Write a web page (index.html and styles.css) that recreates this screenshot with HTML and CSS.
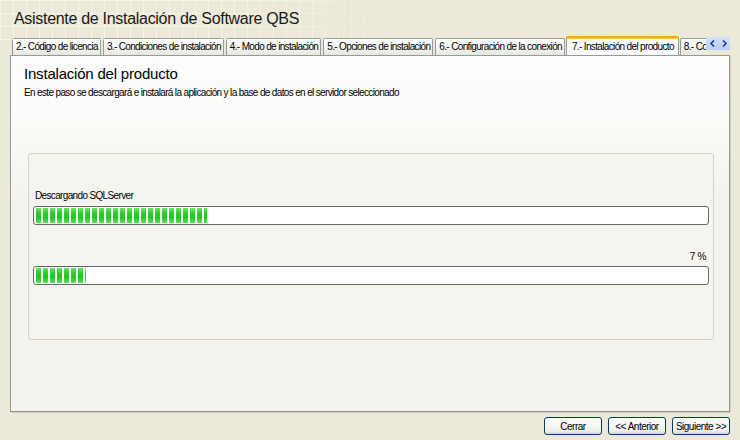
FILE: index.html
```html
<!DOCTYPE html>
<html lang="es">
<head>
    <meta charset="UTF-8">
    <title>Asistente de Instalación de Software QBS</title>
    <link rel="stylesheet" href="styles.css">
</head>
<body>
    <div class="window">
        <h1 class="title">Asistente de Instalación de Software QBS</h1>

        <div class="tab-row">
            <div class="tabs">
                <div class="tab">2.- Código de licencia</div>
                <div class="tab">3.- Condiciones de instalación</div>
                <div class="tab">4.- Modo de instalación</div>
                <div class="tab">5.- Opciones de instalación</div>
                <div class="tab">6.- Configuración de la conexión</div>
                <div class="tab active">7.- Instalación del producto</div>
                <div class="tab">8.- Configuración final</div>
            </div>
            <div class="tab-scroll">
                <span class="scroll-btn">
                    <svg width="7" height="7" viewBox="0 0 7 7"><path d="M5 0.5 L2 3.5 L5 6.5" fill="none" stroke="#1c3f94" stroke-width="1.6"/></svg>
                </span>
                <span class="scroll-btn">
                    <svg width="7" height="7" viewBox="0 0 7 7"><path d="M2 0.5 L5 3.5 L2 6.5" fill="none" stroke="#1c3f94" stroke-width="1.6"/></svg>
                </span>
            </div>
        </div>

        <div class="panel">
            <h2 class="panel-title">Instalación del producto</h2>
            <p class="panel-desc">En este paso se descargará e instalará la aplicación y la base de datos en el servidor seleccionado</p>

            <div class="group">
                <div class="step-label">Descargando SQLServer</div>
                <div class="progress">
                    <div class="progress-fill" style="width: 25.5%"></div>
                </div>

                <div class="percent">7 %</div>
                <div class="progress">
                    <div class="progress-fill" style="width: 7.4%"></div>
                </div>
            </div>
        </div>

        <div class="buttons">
            <button class="btn">Cerrar</button>
            <button class="btn">&lt;&lt; Anterior</button>
            <button class="btn">Siguiente &gt;&gt;</button>
        </div>
    </div>
</body>
</html>
```

FILE: styles.css
```css
body {
    margin: 0;
    padding: 0;
    font-family: "Liberation Sans", Arial, sans-serif;
    font-size: 10px;
    letter-spacing: -0.65px;
    background-color: #ECE9D8;
    color: #000000;
}

.window {
    position: relative;
    width: 740px;
    height: 440px;
    overflow: hidden;
    background-color: #ECE9D8;
}

/* faint grid behind the title, fading to the right */
.window::before {
    content: "";
    position: absolute;
    left: 0;
    top: 0;
    width: 480px;
    height: 40px;
    background-image:
        repeating-linear-gradient(90deg, rgba(255, 255, 255, 0.45) 0 1px, transparent 1px 13px),
        repeating-linear-gradient(0deg, rgba(255, 255, 255, 0.45) 0 1px, transparent 1px 13px);
    -webkit-mask-image: linear-gradient(90deg, #000 0%, #000 40%, transparent 100%);
    mask-image: linear-gradient(90deg, #000 0%, #000 40%, transparent 100%);
}

.title {
    position: relative;
    margin: 0;
    padding: 9px 0 0 14px;
    height: 27px;
    font-size: 16px;
    letter-spacing: -0.3px;
    font-weight: normal;
    line-height: 20px;
    color: #1a1a1a;
}

/* Tabs */
.tab-row {
    display: flex;
    align-items: flex-end;
    height: 19px;
    margin-left: 11px;
    margin-right: 10px;
}

.tabs {
    display: flex;
    align-items: flex-end;
    gap: 2px;
    flex: 1;
    overflow: hidden;
    height: 19px;
    padding-left: 1px;
}

.tab {
    flex-shrink: 0;
    height: 16px;
    padding: 0 2px 0 3px;
    line-height: 16px;
    white-space: nowrap;
    color: #000;
    border: 1px solid #919B9C;
    border-bottom: none;
    border-radius: 2px 2px 0 0;
    background: linear-gradient(#FFFFFF, #F3F3EF 60%, #E6E5DE);
}

.tab.active {
    height: 18px;
    line-height: 17px;
    margin: 0 -1px -1px;
    padding: 0 4px 0 5px;
    background: #FCFCFE;
    border-top: 2px solid #F6A623;
    box-shadow: inset 0 1px 0 #FFC844;
    position: relative;
    z-index: 1;
}

.tab-scroll {
    display: flex;
    margin-bottom: 5px;
}

.scroll-btn {
    display: flex;
    align-items: center;
    justify-content: center;
    width: 12px;
    height: 13px;
    background: linear-gradient(#D6E2FC, #B9CDF8);
}

/* Main panel */
.panel {
    height: 355px;
    margin: 0 10px;
    padding: 0 15px 0 13px;
    border: 1px solid #919B9C;
    border-bottom-color: #8E9596;
    background: linear-gradient(#FDFDFD 0, #FBFBF9 60px, #F4F3EE 140px, #F4F3EE 100%);
    box-shadow: 1px 1px 0 #D0CEBF;
}

.panel-title {
    margin: 0;
    padding-top: 9px;
    font-size: 15px;
    letter-spacing: -0.2px;
    font-weight: normal;
    line-height: 18px;
    color: #000;
}

.panel-desc {
    margin: 0;
    padding-top: 3px;
    line-height: 13px;
}

.group {
    margin: 54px 0 0 4px;
    height: 149px;
    padding: 36px 4px 0 4px;
    border: 1px solid #D5D3C6;
    border-radius: 3px;
    background: #F5F4EF;
}

.step-label {
    line-height: 12px;
    padding-left: 2px;
    margin-bottom: 4px;
}

.percent {
    margin-top: 26px;
    margin-bottom: 3px;
    padding-right: 3px;
    line-height: 12px;
    letter-spacing: -0.3px;
    text-align: right;
}

.progress {
    height: 15px;
    padding: 1px 2px;
    border: 1px solid #686868;
    border-radius: 3px;
    background: #FFFFFF;
}

.progress-fill {
    height: 15px;
    background-image:
        repeating-linear-gradient(90deg, transparent 0 5px, #FFFFFF 5px 7px),
        linear-gradient(#6CE66C, #2ED12E 30%, #1FC41F 60%, #5ADF5A 100%);
}

/* Bottom buttons */
.buttons {
    display: flex;
    justify-content: flex-end;
    gap: 6px;
    margin: 5px 10px 0 0;
}

.btn {
    width: 58px;
    height: 18px;
    padding: 0;
    font-family: inherit;
    font-size: 10px;
    letter-spacing: -0.5px;
    color: #000;
    border: 1px solid #003C74;
    border-radius: 3px;
    background: linear-gradient(#FFFFFF, #F0F0EA 80%, #D6D0C5);
}
```
